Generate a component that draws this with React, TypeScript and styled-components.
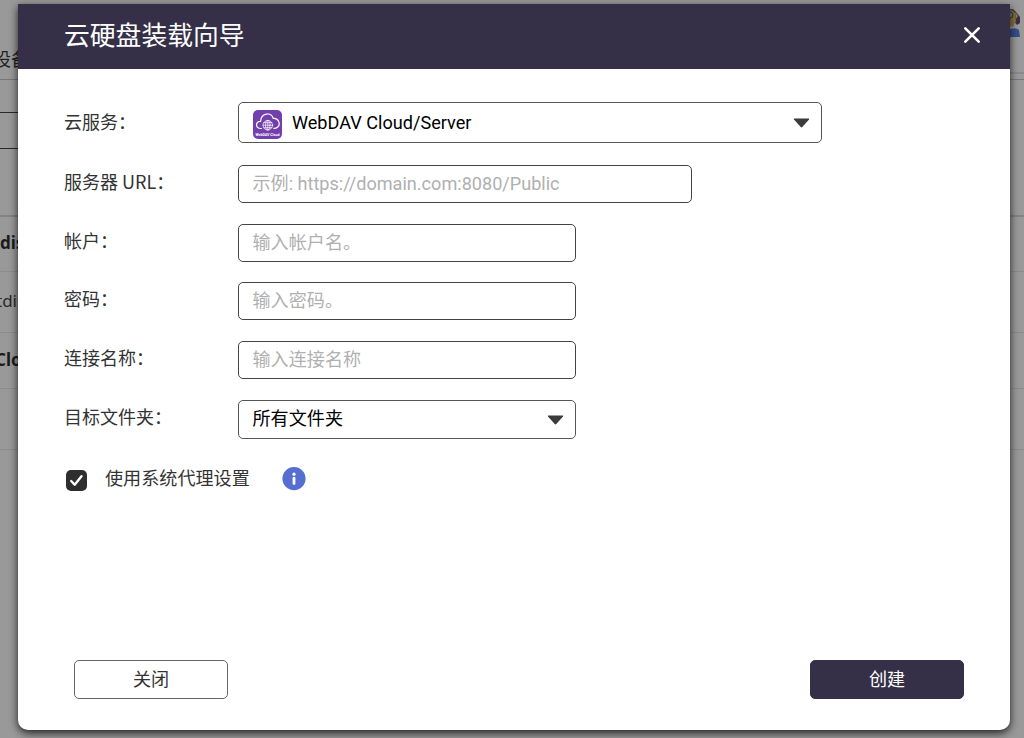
import React, { useState } from "react";
import styled, { createGlobalStyle } from "styled-components";

const GlobalStyle = createGlobalStyle`
  * { box-sizing: border-box; }
  body {
    margin: 0;
    overflow: hidden;
    background: #999;
    font-family: Roboto, "Noto Sans CJK SC", sans-serif;
    font-size: 18.1px;
    color: #333;
  }
  input, button { font: inherit; }
`;

const Page = styled.div`
  position: relative;
  height: 738px;
  overflow: hidden;
  background: #999;
`;

const PageTop = styled.div`
  display: flex;
  justify-content: space-between;
  height: 80px;
  border-bottom: 1px solid #777;
`;

const PageTitle = styled.span`
  margin: 48px 0 0 -7px;
  line-height: 24px;
  font-size: 18px;
  color: #222;
`;

const PageTopRight = styled.div`
  display: flex;
  justify-content: flex-end;
  width: 30px;
  height: 74px;
  border-bottom: 2px solid #8b8b8b;
  padding: 8px 3px 0 0;
`;

const SearchArea = styled.div`
  height: 137px;
  padding-top: 32px;
  border-bottom: 2px solid #828282;
`;

const SearchBox = styled.div`
  width: 400px;
  height: 37px;
  border: 1px solid #292929;
  border-left: 0;
`;

const ListRow = styled.div<{ $height: number; $bold?: boolean; $shift: number }>`
  display: flex;
  align-items: center;
  height: ${(p) => p.$height}px;
  padding-bottom: 3px;
  border-bottom: 1px solid #8c8c8c;
  color: ${(p) => (p.$bold ? "#1c1c1c" : "#292929")};
  font-family: "Noto Sans", sans-serif;
  font-size: 17px;
  font-weight: ${(p) => (p.$bold ? 700 : 400)};
  text-indent: ${(p) => p.$shift}px;
`;

const Dialog = styled.section`
  position: absolute;
  top: 4px;
  left: 18px;
  display: flex;
  flex-direction: column;
  width: 992px;
  height: 726px;
  overflow: hidden;
  border-radius: 0 0 10px 10px;
  background: #fff;
  box-shadow: 0 3px 8px 0 rgba(0, 0, 0, 0.8);
`;

const Header = styled.header`
  display: flex;
  align-items: center;
  justify-content: space-between;
  height: 65px;
  padding: 0 29px 3px 46px;
  background: #353047;
  color: #fff;
`;

const Title = styled.h1`
  margin: 0;
  padding-top: 2px;
  font-size: 25.8px;
  font-weight: 400;
  line-height: 38px;
`;

const CloseIcon = styled.button`
  display: flex;
  padding: 0;
  border: 0;
  background: none;
  color: inherit;
`;

const Form = styled.div`
  flex: 1;
  padding: 33px 46px 0 45px;
`;

const Row = styled.div<{ $height: number }>`
  display: flex;
  align-items: flex-start;
  height: ${(p) => p.$height}px;
`;

const Label = styled.label<{ $top?: number }>`
  width: 175px;
  padding: ${(p) => p.$top ?? 3}px 0 0 1px;
  line-height: 26px;
  font-family: "Noto Sans CJK SC", sans-serif;
  font-size: 18px;
`;

const TextInput = styled.input<{ $width: number }>`
  width: ${(p) => p.$width}px;
  height: 38px;
  padding: 0 13px 1px 13.5px;
  border: 1.5px solid #444;
  border-radius: 5px;
  outline: 0;
  background: #fff;
  color: #000;
  &::placeholder { color: #b0b0b0; opacity: 1; }
`;

const Select = styled.button<{ $width: number; $height: number }>`
  display: flex;
  align-items: center;
  width: ${(p) => p.$width}px;
  height: ${(p) => p.$height}px;
  padding: 0 11px 0 13.5px;
  border: 1.5px solid #555;
  border-radius: 5px;
  background: #fff;
  color: #000;
  text-align: left;
`;

const SelectText = styled.span<{ $lift?: number }>`
  flex: 1;
  padding-bottom: ${(p) => p.$lift ?? 0}px;
`;

const ServiceIcon = styled.svg`
  margin: 3px 10.5px 0 0;
`;

const ProxyRow = styled.div`
  display: flex;
  align-items: center;
  height: 28px;
  margin-top: 1px;
  padding-left: 3px;
`;

const CheckBox = styled.button`
  display: flex;
  align-items: center;
  justify-content: center;
  width: 21px;
  height: 21px;
  margin: 2px 18px 0 0;
  padding: 0;
  border: 0;
  border-radius: 5px;
  background: #2e2e2e;
`;

const ProxyLabel = styled.span`
  width: 177px;
  padding-bottom: 5px;
  font-size: 18.1px;
`;

const Footer = styled.footer`
  display: flex;
  justify-content: space-between;
  padding: 0 46px 31px 56px;
`;

const Button = styled.button<{ $primary?: boolean }>`
  width: 154px;
  height: 39px;
  padding: 0 0 4px;
  border: 1px solid ${(p) => (p.$primary ? "#353047" : "#666")};
  border-radius: 5px;
  background: ${(p) => (p.$primary ? "#353047" : "#fff")};
  color: ${(p) => (p.$primary ? "#fff" : "#333")};
`;

const Arrow = () => (
  <svg width="17" height="10" viewBox="0 0 17 10">
    <path d="M1.4 .5h14.2q1 0 .4.9L9.3 9q-.8.9-1.6 0L1 1.4Q.4.5 1.4.5Z" fill="#3b3b3b" />
  </svg>
);

const WebDavIcon = () => (
  <ServiceIcon width="29" height="29" viewBox="0 0 29 29">
    <rect width="29" height="29" rx="5" fill="#733fad" />
    <g fill="none" stroke="#fff" strokeLinecap="round">
      <path
        d="M8.4 18.5H7.7C1.9 18.5 2.4 10.8 7.6 11.3C8 3.4 18 1.2 20.3 8.5C25.8 7.9 28 14.5 24.4 17.2Q23 18.5 20.8 18.4"
        strokeWidth="1.2"
      />
      <g strokeWidth=".7">
        <circle cx="14.8" cy="15.2" r="4.8" />
        <ellipse cx="14.8" cy="15.2" rx="2.2" ry="4.8" />
        <path d="M14.8 10.4v9.6M10 15.2h9.6M10.8 12.7h8M10.8 17.7h8" />
      </g>
    </g>
    <text
      x="2.4"
      y="25.6"
      fill="#fff"
      fontFamily="Roboto"
      fontSize="3.9"
      fontWeight="700"
      textLength="24.2"
      lengthAdjust="spacingAndGlyphs"
    >
      WebDAV Cloud
    </text>
  </ServiceIcon>
);

const Avatar = () => (
  <svg width="16" height="32" viewBox="0 0 16 32">
    <path d="M3 3Q7-1 10 3l5 6v6l-3 2-4-5-5 2Z" fill="#353047" />
    <path d="M2 3q5-3 8 2l1 8-3 6-6-2Z" fill="#8d733d" />
    <circle cx="5" cy="7" r="3" fill="#718078" stroke="#333340" />
    <path d="m10 4 3 4-2 3Z" fill="#a17a32" />
    <path d="M1 29v-6q8-5 13-1l1 7Z" fill="#344f8b" />
  </svg>
);

const fields = [
  { label: "服务器 URL：", placeholder: "示例: https://domain.com:8080/Public", width: 454, height: 59 },
  { label: "帐户：", placeholder: "输入帐户名。", width: 338, height: 58 },
  { label: "密码：", placeholder: "输入密码。", width: 338, height: 59 },
  { label: "连接名称：", placeholder: "输入连接名称", width: 338, height: 59 },
];

export default function App() {
  const [useProxy, setUseProxy] = useState(true);
  return (
    <Page>
      <GlobalStyle />
      <PageTop>
        <PageTitle>设备</PageTitle>
        <PageTopRight><Avatar /></PageTopRight>
      </PageTop>
      <SearchArea><SearchBox /></SearchArea>
      <ListRow $height={55} $bold $shift={0}>disk</ListRow>
      <ListRow $height={61} $shift={-4}>tdisk</ListRow>
      <ListRow $height={56} $bold $shift={-5}>Cloud</ListRow>
      <ListRow $height={61} $shift={0} />
      <Dialog>
        <Header>
          <Title>云硬盘装载向导</Title>
          <CloseIcon aria-label="关闭">
            <svg width="18" height="18" viewBox="0 0 18 18">
              <path d="M2.3 2.3 15.7 15.7M15.7 2.3 2.3 15.7" stroke="#fff" strokeWidth="2.6" strokeLinecap="round" />
            </svg>
          </CloseIcon>
        </Header>
        <Form>
          <Row $height={63}>
            <Label $top={6}>云服务：</Label>
            <Select $width={584} $height={41}>
              <WebDavIcon />
              <SelectText>WebDAV Cloud/Server</SelectText>
              <Arrow />
            </Select>
          </Row>
          {fields.map((field) => (
            <Row key={field.label} $height={field.height}>
              <Label>{field.label}</Label>
              <TextInput $width={field.width} placeholder={field.placeholder} />
            </Row>
          ))}
          <Row $height={64}>
            <Label>目标文件夹：</Label>
            <Select $width={338} $height={39}>
              <SelectText $lift={5}>所有文件夹</SelectText>
              <Arrow />
            </Select>
          </Row>
          <ProxyRow>
            <CheckBox role="checkbox" aria-checked={useProxy} onClick={() => setUseProxy(!useProxy)}>
              {useProxy && (
                <svg width="15" height="15" viewBox="0 0 15 15">
                  <path d="m2.2 8 3.5 3.7 6.8-8.5" fill="none" stroke="#fff" strokeWidth="2.4" strokeLinecap="round" strokeLinejoin="round" />
                </svg>
              )}
            </CheckBox>
            <ProxyLabel>使用系统代理设置</ProxyLabel>
            <svg width="24" height="24" viewBox="0 0 24 24">
              <circle cx="12" cy="11.6" r="11.6" fill="#566ed0" />
              <circle cx="12" cy="7.2" r="1.6" fill="#fff" />
              <path d="M12 11.2v5.3" stroke="#fff" strokeWidth="2.8" strokeLinecap="round" />
            </svg>
          </ProxyRow>
        </Form>
        <Footer>
          <Button>关闭</Button>
          <Button $primary>创建</Button>
        </Footer>
      </Dialog>
    </Page>
  );
}
